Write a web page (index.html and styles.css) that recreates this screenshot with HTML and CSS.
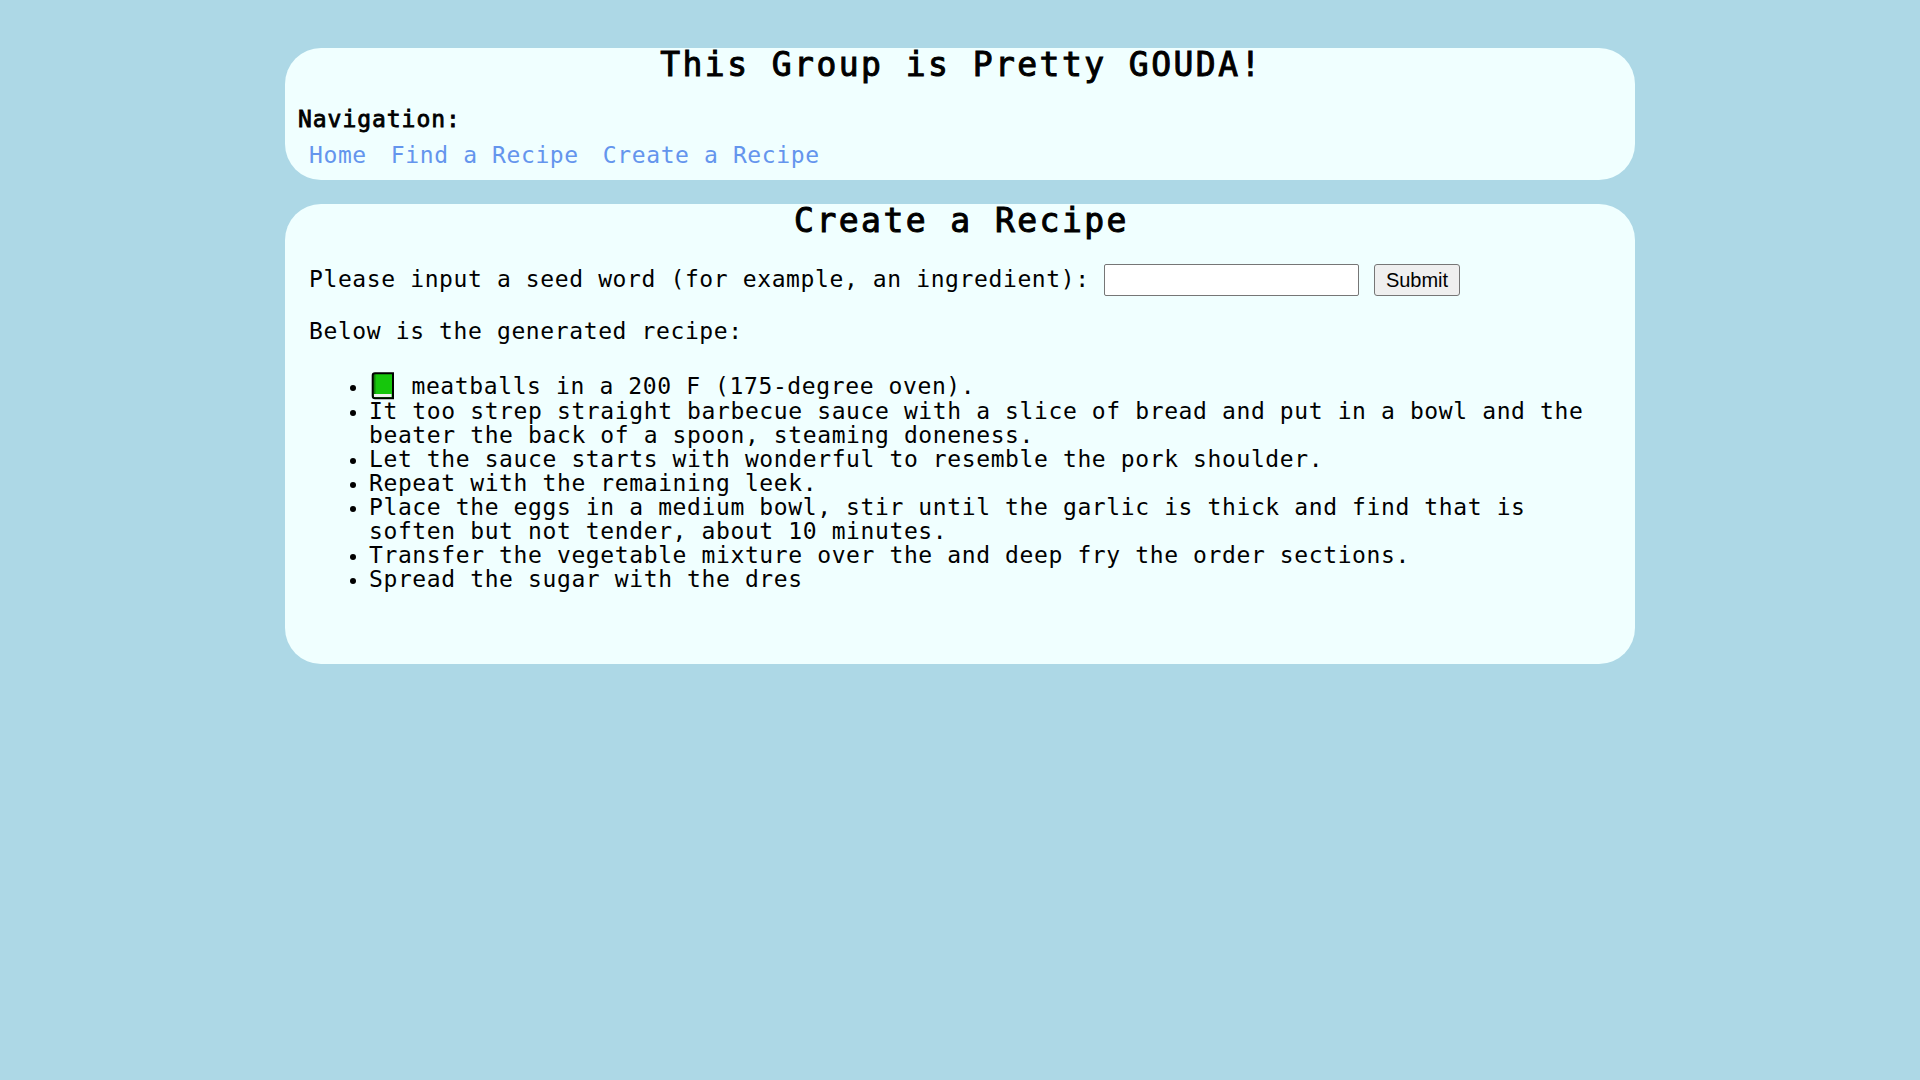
FILE: index.html
```html
<!DOCTYPE html>
<html lang="en">
<head>
<meta charset="utf-8">
<title>Create a Recipe</title>
<link rel="stylesheet" href="styles.css">
</head>
<body>
<header class="card site-header">
  <h1 class="title">This Group is Pretty GOUDA!</h1>
  <nav>
    <p class="nav-label">Navigation:</p>
    <div class="nav-links"><a href="#">Home</a><a href="#">Find a Recipe</a><a href="#">Create a Recipe</a></div>
  </nav>
</header>
<main class="card recipe">
  <h2 class="title">Create a Recipe</h2>
  <form class="seed-form">
    <label for="seed">Please input a seed word (for example, an ingredient):</label>
    <input id="seed" class="seed-input" type="text">
    <button class="submit" type="button">Submit</button>
  </form>
  <p class="intro">Below is the generated recipe:</p>
  <ul class="steps">
    <li class="first"><svg class="book" viewBox="0 0 28 28" aria-label="green book"><path d="M5 1H24V26H5Q3.5 26 3.5 24V4Q3.5 1 5 1Z" fill="#16c60c"/><path d="M4 2H6.5V22H4Z" fill="#13830d"/><path d="M5 22H22.5V25H5Z" fill="#f0f0f0"/><path d="M24 1.2H6Q3.7 1.2 3.7 3.5V24Q3.7 26.2 6 26.2H24Z" fill="none" stroke="#000" stroke-width="2"/></svg> meatballs in a 200 F (175-degree oven).</li>
    <li>It too strep straight barbecue sauce with a slice of bread and put in a bowl and the beater the back of a spoon, steaming doneness.</li>
    <li>Let the sauce starts with wonderful to resemble the pork shoulder.</li>
    <li>Repeat with the remaining leek.</li>
    <li>Place the eggs in a medium bowl, stir until the garlic is thick and find that is soften but not tender, about 10 minutes.</li>
    <li>Transfer the vegetable mixture over the and deep fry the order sections.</li>
    <li>Spread the sugar with the dres</li>
  </ul>
</main>
</body>
</html>
```
FILE: styles.css
```css
* { box-sizing: border-box; }
body {
  margin: 0;
  padding-top: 48px;
  background: lightblue;
  color: #000;
  font: 23px/24px "DejaVu Sans Mono", monospace;
  letter-spacing: 0.61px;
}
.card {
  width: 1350px;
  margin: 0 auto 24px;
  border-radius: 36px;
  background: azure;
}
.site-header { height: 132px; }
.recipe { height: 460px; }
.title {
  margin: 0;
  padding: 0 0 3px 3px;
  font-size: 33px;
  line-height: 33px;
  font-weight: normal;
  letter-spacing: 2.45px;
  text-align: center;
  -webkit-text-stroke: 1px #000;
}
.nav-label {
  margin: 23px 0 0 13px;
  letter-spacing: 0.95px;
  -webkit-text-stroke: 0.8px #000;
}
.nav-links {
  display: flex;
  gap: 24px;
  padding: 12px 0 0 24px;
}
.nav-links a { color: cornflowerblue; text-decoration: none; }
.seed-form {
  display: flex;
  align-items: center;
  height: 32px;
  margin: 24px 24px 0;
}
.seed-form label { padding-bottom: 2px; }
.seed-input {
  width: 255px;
  height: 32px;
  margin: 0 15px 0 auto;
  border: 1px solid #767676;
  border-radius: 2px;
  background: #fff;
}
.submit {
  width: 86px;
  height: 32px;
  margin-right: 151px;
  padding: 0;
  border: 1px solid #767676;
  border-radius: 3px;
  background: #efefef;
  color: #000;
  font: 20px "Liberation Sans", sans-serif;
}
.intro { margin: 23px 24px 0; }
.steps {
  margin: 29px 24px 0;
  padding-left: 60px;
  list-style: none;
}
.steps li::before {
  content: "";
  display: inline-block;
  width: 6px;
  height: 6px;
  margin: 0 13px 3px -19px;
  border-radius: 50%;
  background: #000;
}
.steps .first { height: 27px; }
.book {
  width: 28px;
  height: 28px;
  margin-bottom: -6px;
  vertical-align: baseline;
}
```
